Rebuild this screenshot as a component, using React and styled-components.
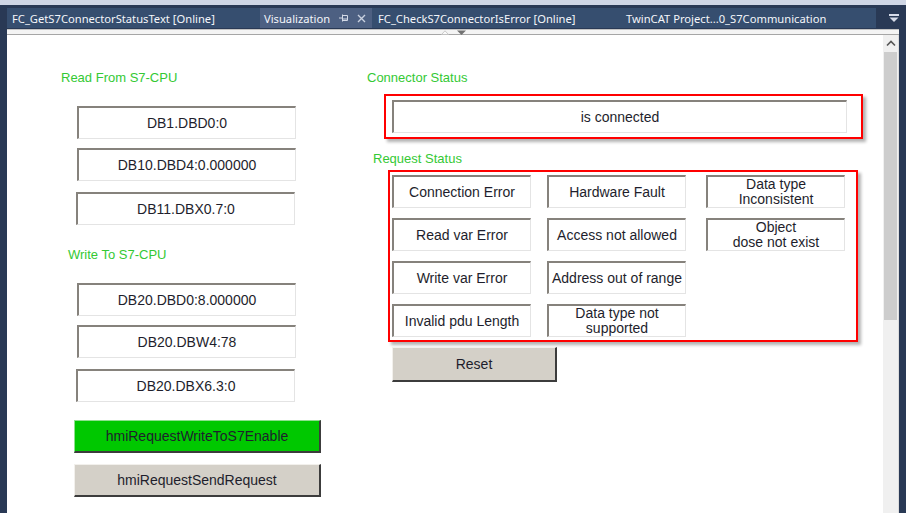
import React from 'react'
import styled, { createGlobalStyle } from 'styled-components'

const GlobalStyle = createGlobalStyle`
  html, body {
    margin: 0;
    padding: 0;
  }
  body {
    width: 906px;
    height: 513px;
    overflow: hidden;
    background: #293955;
  }
`

const Frame = styled.div`
  width: 906px;
  height: 513px;
  box-sizing: border-box;
  background: #293955;
  border-top: 5px solid #cfd6e5;
  padding: 3px 0 0 7px;
  display: flex;
  flex-direction: column;
`

const TabBar = styled.div`
  display: flex;
  align-items: stretch;
  height: 20px;
  margin-bottom: 1px;
`

const Tab = styled.div`
  width: ${p => p.$w}px;
  box-sizing: border-box;
  padding-left: ${p => p.$pad}px;
  background: ${p => (p.$active ? '#4d6082' : '#364e6f')};
  color: #f4f6fa;
  font: 11.2px "Noto Sans", "Open Sans", sans-serif;
  display: flex;
  align-items: center;
  white-space: nowrap;
  overflow: hidden;
`

const TabTools = styled.span`
  display: flex;
  align-items: center;
  gap: 9px;
  margin-left: auto;
  margin-right: 6px;
`

const Spacer = styled.div`
  flex: 1;
`

const WellMenu = styled.div`
  width: 24px;
  display: flex;
  align-items: center;
  justify-content: center;
`

const Panel = styled.div`
  flex: 1;
  min-height: 0;
  width: 892px;
  display: flex;
  flex-direction: column;
  background: #fff;
`

const Ruler = styled.div`
  height: 4px;
  background: #f4f4f4;
  border-top: 1px solid #c4c4c4;
  border-bottom: 1px solid #a6a6a6;
  display: flex;
  align-items: flex-start;
  gap: 8px;
  padding-left: 434px;
`

const Body = styled.div`
  flex: 1;
  min-height: 0;
  display: flex;
`

const Canvas = styled.div`
  width: 876px;
  display: flex;
  padding: 35px 0 0 54px;
  box-sizing: border-box;
  background: #fff;
`

const Column = styled.div`
  width: ${p => p.$w}px;
  display: flex;
  flex-direction: column;
  align-items: flex-start;
`

const Label = styled.div`
  font: 13px "Liberation Sans", Arial, sans-serif;
  line-height: 16px;
  color: #34c934;
  margin-left: ${p => p.$x || 0}px;
  margin-top: ${p => p.$y || 0}px;
`

const Field = styled.div`
  width: ${p => p.$w || 219}px;
  height: 33px;
  box-sizing: border-box;
  flex-shrink: 0;
  border-top: 2px solid #86827c;
  border-left: 2px solid #86827c;
  border-right: 1px solid #e4e4e4;
  border-bottom: 1px solid #e4e4e4;
  margin-left: ${p => p.$x || 0}px;
  margin-top: ${p => p.$y || 0}px;
  display: flex;
  align-items: center;
  justify-content: center;
  text-align: center;
  white-space: pre-line;
  font: 14px "Liberation Sans", Arial, sans-serif;
  line-height: 15px;
  color: #1e1e2c;
  background: #fff;
`

const Button = styled.div`
  width: ${p => p.$w}px;
  height: ${p => p.$h}px;
  box-sizing: border-box;
  margin-left: ${p => p.$x || 0}px;
  margin-top: ${p => p.$y || 0}px;
  background: ${p => p.$bg};
  border-top: 1px solid ${p => p.$light};
  border-left: 1px solid ${p => p.$light};
  border-right: 2px solid #3c3c3c;
  border-bottom: 2px solid #3c3c3c;
  display: flex;
  align-items: center;
  justify-content: center;
  font: 14px "Liberation Sans", Arial, sans-serif;
  color: #1e1e2c;
`

const Group = styled.div`
  width: ${p => p.$w}px;
  height: ${p => p.$h}px;
  box-sizing: border-box;
  margin-left: ${p => p.$x || 0}px;
  margin-top: ${p => p.$y || 0}px;
  border: 2px solid #ff0000;
  box-shadow: 3px 3px 3px rgba(0, 0, 0, 0.3);
  padding: ${p => p.$pad};
  display: flex;
`

const StatusGrid = styled.div`
  display: grid;
  grid-template-columns: 155px 159px 139px;
  grid-template-rows: repeat(4, 33px);
  row-gap: 10px;
`

const Scrollbar = styled.div`
  width: 15px;
  background: #f0f0f0;
  border-right: 1px solid #dcdcdc;
  display: flex;
  flex-direction: column;
`

const ScrollArrow = styled.div`
  height: 17px;
  display: flex;
  align-items: center;
  justify-content: center;
`

const Thumb = styled.div`
  height: 268px;
  margin: 0 1px;
  background: #cdcdcd;
`

const PinIcon = () => (
  <svg width="9" height="8" viewBox="0 0 9 8">
    <path d="M0 4H3M3.5 0.5V7.5M3.5 1.5H8.5V6.5H3.5M3.5 5H8.5" fill="none" stroke="#d3d9e6" strokeWidth="1" />
  </svg>
)

const CloseIcon = () => (
  <svg width="9" height="9" viewBox="0 0 9 9">
    <path d="M1 1L8 8M8 1L1 8" stroke="#c9d1e0" strokeWidth="1.4" />
  </svg>
)

const MenuIcon = () => (
  <svg width="10" height="9" viewBox="0 0 10 9">
    <rect x="0" y="0" width="10" height="2" fill="#d6dbe8" />
    <path d="M0.5 3.5H9.5L5 8Z" fill="#d6dbe8" />
  </svg>
)

const UpMarker = () => (
  <svg width="8" height="5" viewBox="0 0 8 5">
    <path d="M0.5 4.5L4 0.8L7.5 4.5Z" fill="#fafafa" stroke="#bdbdbd" strokeWidth="0.8" />
  </svg>
)

const DownMarker = () => (
  <svg width="9" height="5" viewBox="0 0 9 5">
    <path d="M0 0.5H9L4.5 5Z" fill="#727272" />
  </svg>
)

const Chevron = () => (
  <svg width="10" height="7" viewBox="0 0 10 7">
    <path d="M1 5.5L5 1.5L9 5.5" fill="none" stroke="#555" strokeWidth="1.6" />
  </svg>
)

const statusItems = [
  'Connection Error', 'Hardware Fault', 'Data type\nInconsistent',
  'Read var Error', 'Access not allowed', 'Object\ndose not exist',
  'Write var Error', 'Address out of range', null,
  'Invalid pdu Length', 'Data type not\nsupported', null,
]

const App = () => {
  return (
    <>
      <GlobalStyle />
      <Frame>
        <TabBar>
          <Tab $w={253} $pad={5}>FC_GetS7ConnectorStatusText [Online]</Tab>
          <Tab $w={112} $pad={4} $active>
            Visualization
            <TabTools>
              <PinIcon />
              <CloseIcon />
            </TabTools>
          </Tab>
          <Tab $w={211} $pad={6}>FC_CheckS7ConnectorIsError [Online]</Tab>
          <Tab $w={293} $pad={43}>TwinCAT Project...0_S7Communication</Tab>
          <Spacer />
          <WellMenu>
            <MenuIcon />
          </WellMenu>
        </TabBar>
        <Panel>
          <Ruler>
            <UpMarker />
            <DownMarker />
          </Ruler>
          <Body>
            <Canvas>
              <Column $w={306}>
                <Label>Read From S7-CPU</Label>
                <Field $x={16} $y={20}>DB1.DBD0:0</Field>
                <Field $x={16} $y={9}>DB10.DBD4:0.000000</Field>
                <Field $x={15} $y={11}>DB11.DBX0.7:0</Field>
                <Label $x={7} $y={22}>Write To S7-CPU</Label>
                <Field $x={16} $y={20}>DB20.DBD0:8.000000</Field>
                <Field $x={16} $y={9}>DB20.DBW4:78</Field>
                <Field $x={15} $y={11}>DB20.DBX6.3:0</Field>
                <Button $x={13} $y={18} $w={247} $h={33} $bg="#00c800" $light="#8ee08e">
                  hmiRequestWriteToS7Enable
                </Button>
                <Button $x={13} $y={11} $w={247} $h={33} $bg="#d4d0c8" $light="#f2f0ec">
                  hmiRequestSendRequest
                </Button>
              </Column>
              <Column $w={500}>
                <Label>Connector Status</Label>
                <Group $x={17} $y={8} $w={479} $h={45} $pad="4px 14px 4px 6px">
                  <Field $w={455}>is connected</Field>
                </Group>
                <Label $x={6} $y={12}>Request Status</Label>
                <Group $x={21} $y={3} $w={470} $h={172} $pad="3px 11px 2px 2px">
                  <StatusGrid>
                    {statusItems.map((text, i) =>
                      text ? <Field key={i} $w={139}>{text}</Field> : <span key={i} />
                    )}
                  </StatusGrid>
                </Group>
                <Button $x={25} $y={5} $w={165} $h={35} $bg="#d4d0c8" $light="#f2f0ec">
                  Reset
                </Button>
              </Column>
            </Canvas>
            <Scrollbar>
              <ScrollArrow>
                <Chevron />
              </ScrollArrow>
              <Thumb />
            </Scrollbar>
          </Body>
        </Panel>
      </Frame>
    </>
  )
}

export default App
